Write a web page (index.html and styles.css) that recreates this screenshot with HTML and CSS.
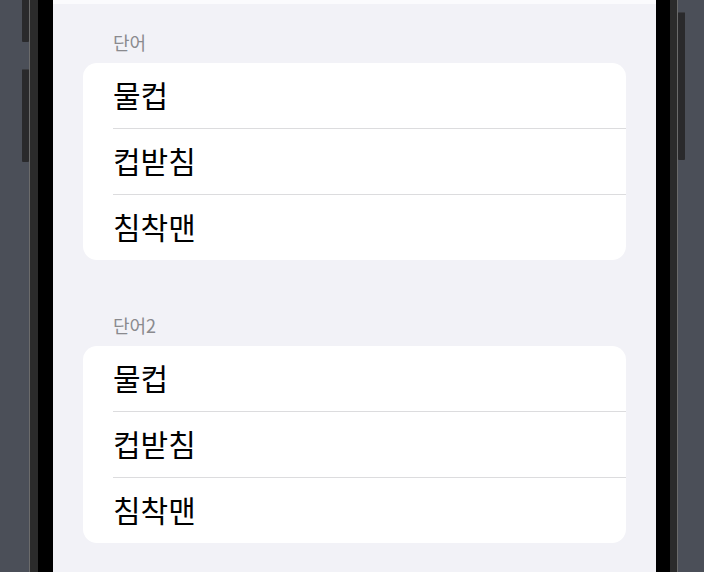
FILE: index.html
```html
<!DOCTYPE html>
<html lang="ko">
<head>
<meta charset="utf-8">
<title>단어</title>
<link rel="stylesheet" href="styles.css">
</head>
<body>
<div class="gutter gutter-left">
  <div class="hw-btn btn-a"></div>
  <div class="hw-btn btn-b"></div>
</div>
<div class="phone">
  <div class="bezel">
    <div class="screen">
      <div class="topbar"></div>
      <section class="group first">
        <div class="group-header">단어</div>
        <ul class="card">
          <li class="row">물컵</li>
          <li class="row">컵받침</li>
          <li class="row">침착맨</li>
        </ul>
      </section>
      <section class="group second">
        <div class="group-header">단어2</div>
        <ul class="card">
          <li class="row">물컵</li>
          <li class="row">컵받침</li>
          <li class="row">침착맨</li>
        </ul>
      </section>
    </div>
  </div>
</div>
<div class="gutter gutter-right">
  <div class="hw-btn btn-c"></div>
</div>
</body>
</html>
```
FILE: styles.css
```css
* { box-sizing: border-box; }
html, body { margin: 0; padding: 0; }
body {
  width: 704px;
  height: 572px;
  overflow: hidden;
  background: #4b4f58;
  display: flex;
  font-family: "Noto Sans CJK KR", "Noto Sans", sans-serif;
}
.gutter {
  display: flex;
  flex-direction: column;
}
.gutter-left {
  width: 29px;
  align-items: flex-end;
}
.gutter-right {
  width: 26px;
  align-items: flex-start;
}
.hw-btn {
  width: 7px;
  background: #2a2a2c;
  border-top: 1px solid #3a3b3f;
  border-radius: 1px;
}
.btn-a { height: 43px; margin-top: -1px; }
.btn-b { height: 93px; margin-top: 27px; }
.btn-c { height: 148px; margin-top: 12px; }
.phone {
  height: 572px;
  background: #2b2b2b;
  border-left: 1px solid #6b6b6b;
  border-right: 1px solid #6b6b6b;
  padding: 0 7px 0 8px;
}
.bezel {
  height: 100%;
  background: #000;
  padding: 0 14px 0 15px;
}
.screen {
  width: 603px;
  height: 100%;
  background: #f2f2f7;
}
.topbar {
  height: 4px;
  background: #fbfbfd;
}
.group { padding: 0 30px; }
.group.first { margin-top: 26px; }
.group.second { margin-top: 53px; }
.group-header {
  font-size: 18px;
  line-height: 24px;
  color: #8a8a8e;
  padding-left: 30px;
  margin-bottom: 9px;
}
.card {
  list-style: none;
  margin: 0;
  padding: 0;
  background: #fff;
  border-radius: 14px;
  overflow: hidden;
}
.row {
  height: 65px;
  line-height: 62px;
  font-size: 30px;
  color: #000;
  margin-left: 30px;
}
.row + .row {
  height: 66px;
  border-top: 1px solid #dcdcde;
}
```
